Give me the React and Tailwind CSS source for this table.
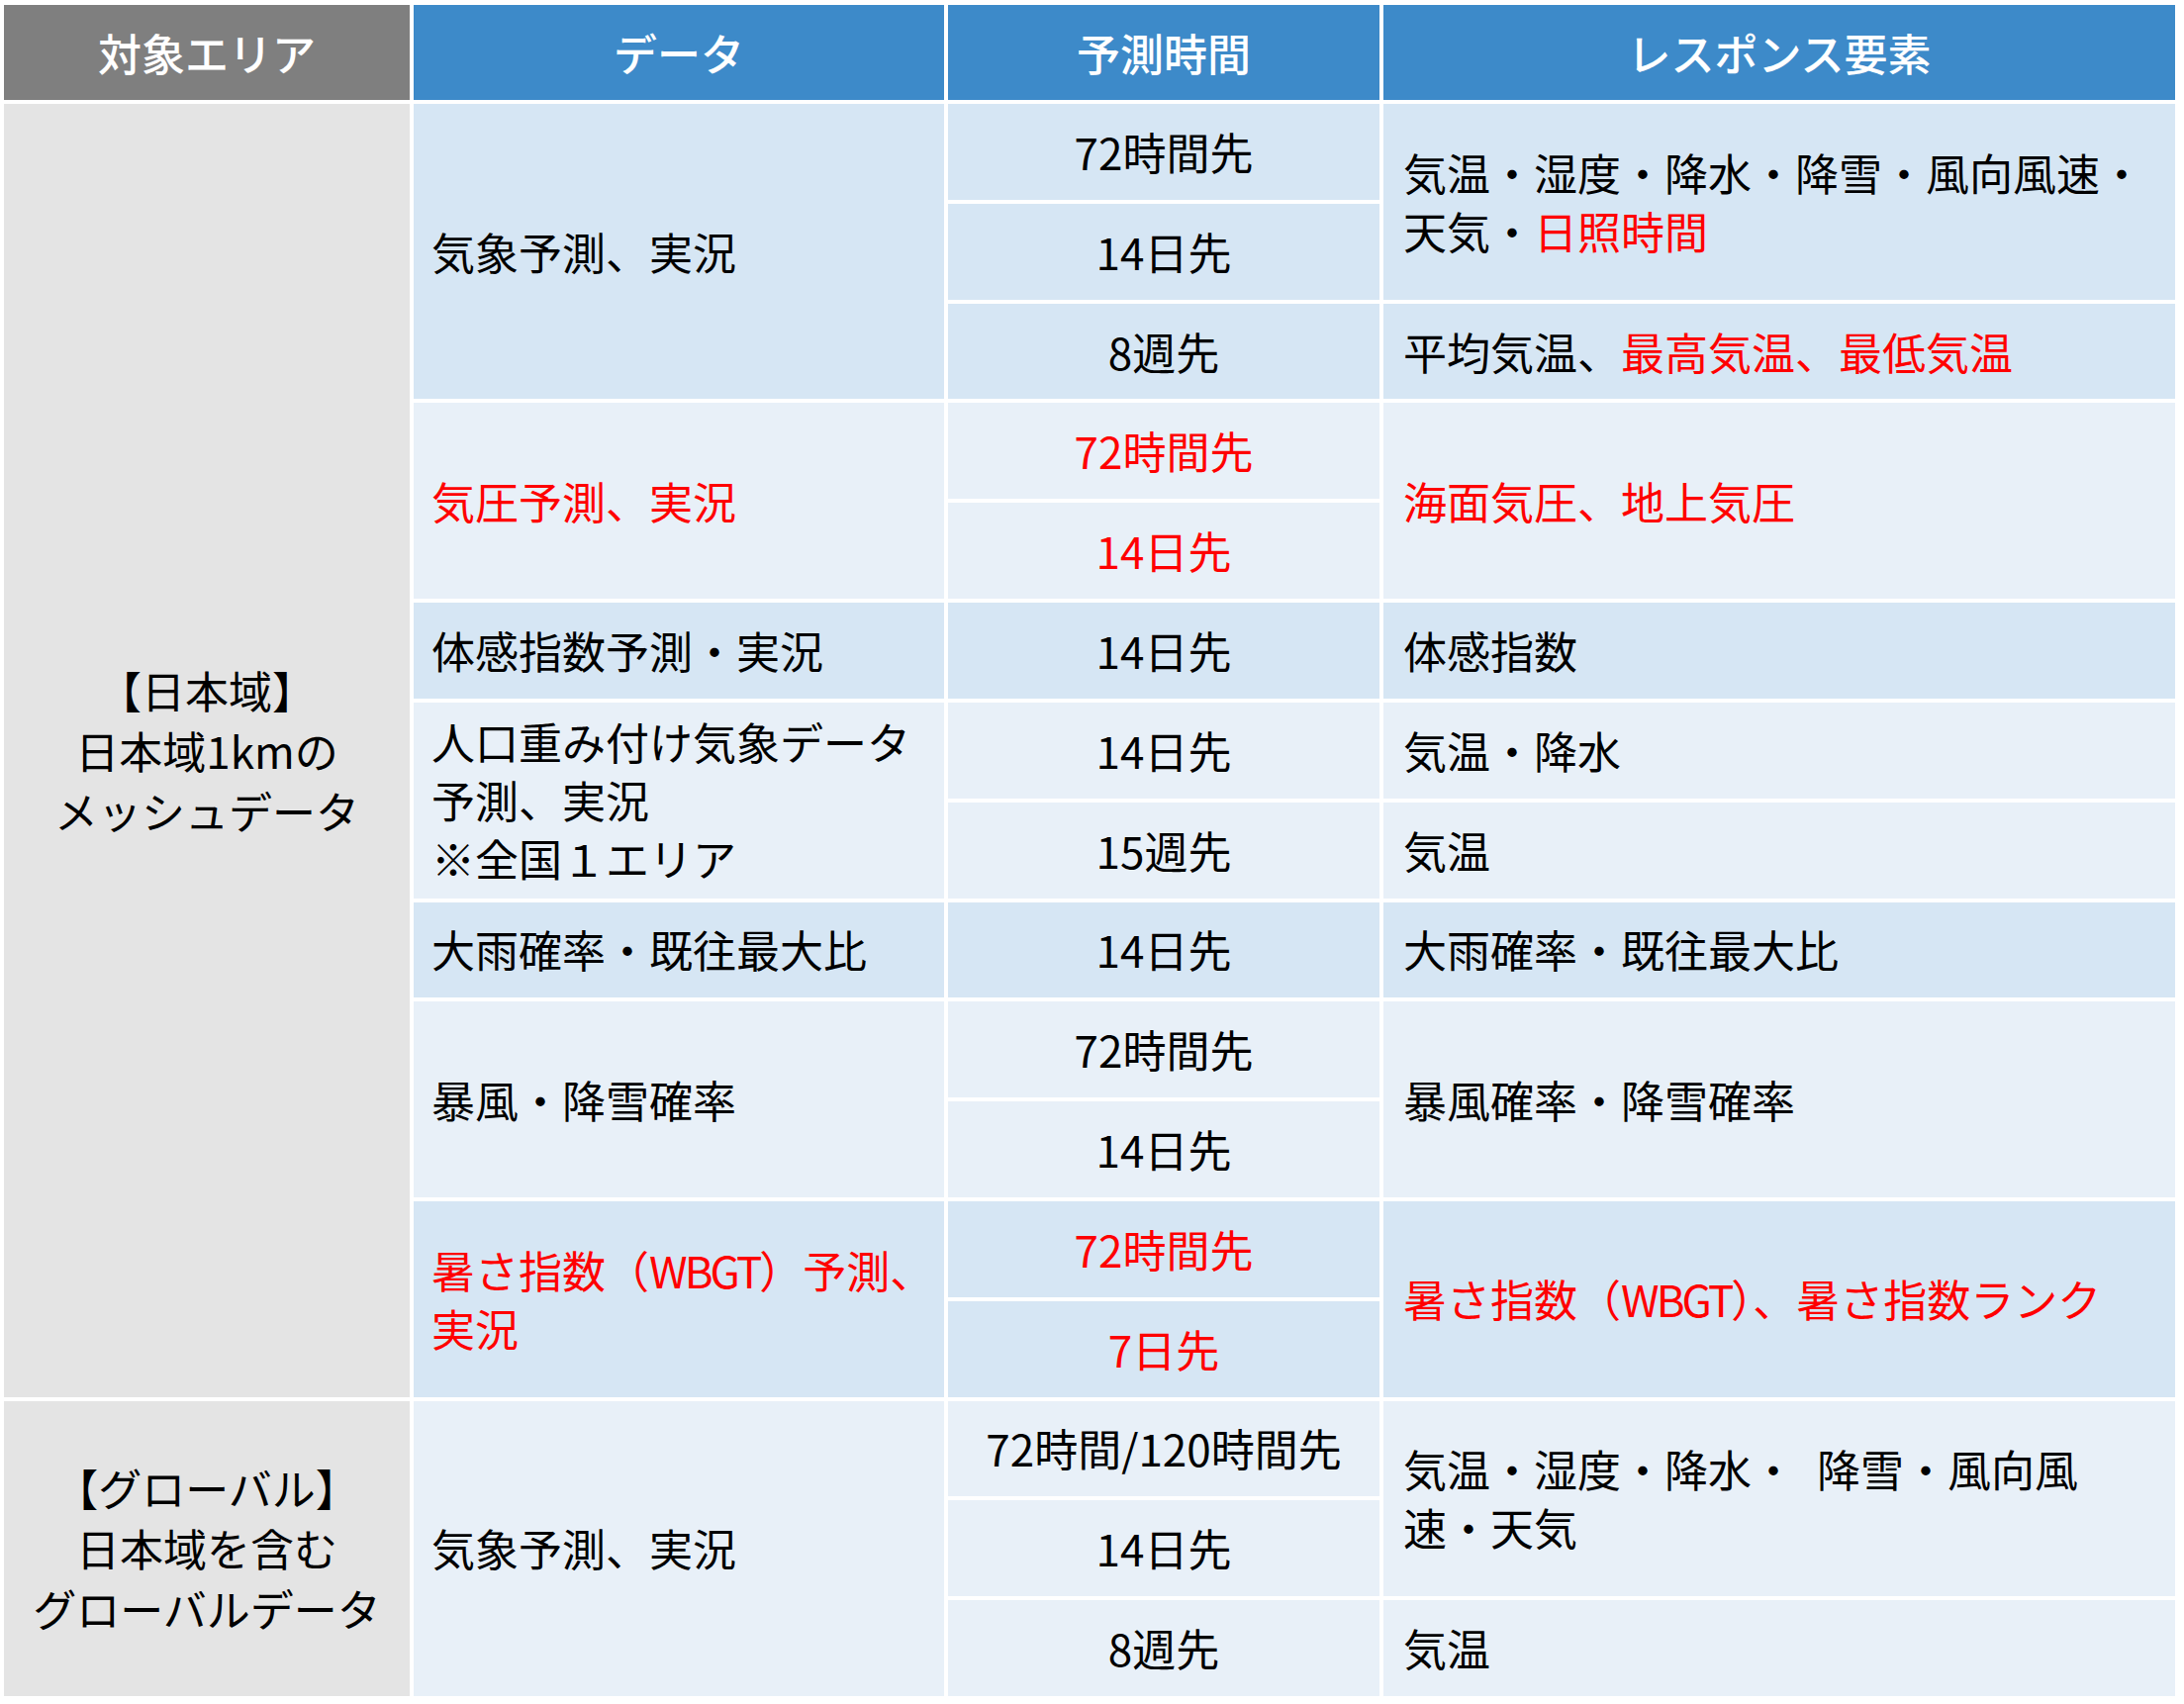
import React from 'react';

const Cell = ({ className = '', children }) => (
    <div className={`flex items-center text-[44px] leading-[59px] text-black ${className}`}>
        {children}
    </div>
);

const Red = ({ children }) => <span className="text-[#ff0000]">{children}</span>;

const dark = 'bg-[#d6e6f4]';
const light = 'bg-[#e8f0f8]';
const area = 'bg-[#e4e4e4] justify-center text-center leading-[61px]';
const data = 'pl-[18px]';
const time = 'justify-center text-center';
const resp = 'pl-[20px]';

const App = () => {
    return (
        <div className="min-h-screen bg-white pl-[4px] pt-[5px] font-['Noto_Sans_CJK_JP','Noto_Sans',sans-serif]">
            <div className="grid h-[1709px] w-[2194px] grid-cols-[410px_536px_436px_800px] grid-rows-[96px_repeat(16,minmax(0,1fr))] gap-[4px]">
                {/* header */}
                <Cell className="bg-[#7f7f7f] justify-center font-medium text-white">対象エリア</Cell>
                <Cell className="bg-[#3d8ac9] justify-center font-medium text-white">データ</Cell>
                <Cell className="bg-[#3d8ac9] justify-center font-medium text-white">予測時間</Cell>
                <Cell className="bg-[#3d8ac9] justify-center font-medium text-white">レスポンス要素</Cell>

                {/* 日本域 */}
                <Cell className={`${area} row-span-13`}>
                    <div>【日本域】<br />日本域1kmの<br />メッシュデータ</div>
                </Cell>
                <Cell className={`${dark} ${data} row-span-3`}>気象予測、実況</Cell>
                <Cell className={`${dark} ${time}`}>72時間先</Cell>
                <Cell className={`${dark} ${resp} row-span-2`}>
                    <div>気温・湿度・降水・降雪・風向風速・<br />天気・<Red>日照時間</Red></div>
                </Cell>
                <Cell className={`${dark} ${time}`}>14日先</Cell>
                <Cell className={`${dark} ${time}`}>8週先</Cell>
                <Cell className={`${dark} ${resp}`}>平均気温、<Red>最高気温、最低気温</Red></Cell>

                <Cell className={`${light} ${data} row-span-2`}><Red>気圧予測、実況</Red></Cell>
                <Cell className={`${light} ${time}`}><Red>72時間先</Red></Cell>
                <Cell className={`${light} ${resp} row-span-2`}><Red>海面気圧、地上気圧</Red></Cell>
                <Cell className={`${light} ${time}`}><Red>14日先</Red></Cell>

                <Cell className={`${dark} ${data}`}>体感指数予測・実況</Cell>
                <Cell className={`${dark} ${time}`}>14日先</Cell>
                <Cell className={`${dark} ${resp}`}>体感指数</Cell>

                <Cell className={`${light} ${data} row-span-2`}>
                    <div>人口重み付け気象データ<br />予測、実況<br />※全国１エリア</div>
                </Cell>
                <Cell className={`${light} ${time}`}>14日先</Cell>
                <Cell className={`${light} ${resp}`}>気温・降水</Cell>
                <Cell className={`${light} ${time}`}>15週先</Cell>
                <Cell className={`${light} ${resp}`}>気温</Cell>

                <Cell className={`${dark} ${data}`}>大雨確率・既往最大比</Cell>
                <Cell className={`${dark} ${time}`}>14日先</Cell>
                <Cell className={`${dark} ${resp}`}>大雨確率・既往最大比</Cell>

                <Cell className={`${light} ${data} row-span-2`}>暴風・降雪確率</Cell>
                <Cell className={`${light} ${time}`}>72時間先</Cell>
                <Cell className={`${light} ${resp} row-span-2`}>暴風確率・降雪確率</Cell>
                <Cell className={`${light} ${time}`}>14日先</Cell>

                <Cell className={`${dark} ${data} row-span-2`}>
                    <div className="whitespace-nowrap">
                        <Red>暑さ指数（<span className="tracking-[-3px]">WBGT</span>）予測、<br />実況</Red>
                    </div>
                </Cell>
                <Cell className={`${dark} ${time}`}><Red>72時間先</Red></Cell>
                <Cell className={`${dark} ${resp} row-span-2`}>
                    <Red>暑さ指数（<span className="tracking-[-3px]">WBGT</span>）、暑さ指数ランク</Red>
                </Cell>
                <Cell className={`${dark} ${time}`}><Red>7日先</Red></Cell>

                {/* グローバル */}
                <Cell className={`${area} row-span-3`}>
                    <div>【グローバル】<br />日本域を含む<br />グローバルデータ</div>
                </Cell>
                <Cell className={`${light} ${data} row-span-3`}>気象予測、実況</Cell>
                <Cell className={`${light} ${time}`}>72時間/120時間先</Cell>
                <Cell className={`${light} ${resp} row-span-2`}>
                    <div>気温・湿度・降水・{'\u2002'}降雪・風向風<br />速・天気</div>
                </Cell>
                <Cell className={`${light} ${time}`}>14日先</Cell>
                <Cell className={`${light} ${time}`}>8週先</Cell>
                <Cell className={`${light} ${resp}`}>気温</Cell>
            </div>
        </div>
    );
};

export default App;
